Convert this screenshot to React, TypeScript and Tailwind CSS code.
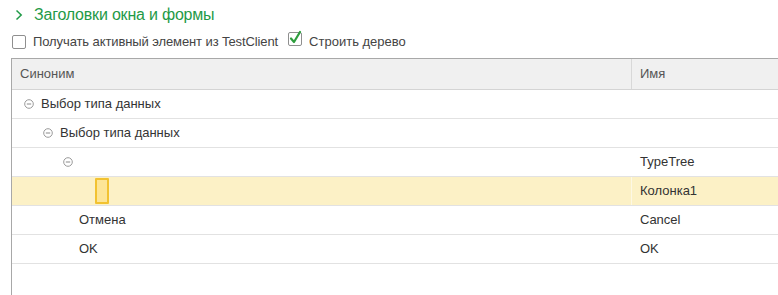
import React from 'react';

type Row = { pad: number; text?: string; name?: string; toggle?: boolean; selected?: boolean };

// pad = left offset of first item in the row, measured from the table's inner edge
const rows: Row[] = [
  { pad: 12, text: 'Выбор типа данных', toggle: true },
  { pad: 31, text: 'Выбор типа данных', toggle: true },
  { pad: 51, toggle: true, name: 'TypeTree' },
  { pad: 83, name: 'Колонка1', selected: true },
  { pad: 67, text: 'Отмена', name: 'Cancel' },
  { pad: 67, text: 'OK', name: 'OK' },
];

function MinusCircle() {
  return (
    <svg width="10" height="10" viewBox="0 0 10 10" className="shrink-0">
      <circle cx="5" cy="5" r="4.3" fill="none" stroke="#9a9a9a" strokeWidth="1" />
      <line x1="2.8" y1="5" x2="7.2" y2="5" stroke="#8a8a8a" strokeWidth="1" />
    </svg>
  );
}

function Checkbox({ checked }: { checked?: boolean }) {
  return (
    <span className="relative inline-block h-[14px] w-[14px] shrink-0 rounded-[2px] border border-[#8f8f8f] bg-white">
      {checked && (
        <svg width="13" height="15" viewBox="0 0 13 15" className="absolute -top-[3px] left-[0px]">
          <path d="M2 8.5 L5 12 L11 2" fill="none" stroke="#2e9e3e" strokeWidth="2.2" strokeLinecap="round" strokeLinejoin="round" />
        </svg>
      )}
    </span>
  );
}

export default function App() {
  return (
    <div className="h-[295px] w-[778px] overflow-hidden bg-white font-['Liberation_Sans',Arial,sans-serif] text-[13px] text-[#333]">
      {/* title */}
      <div className="flex h-[28px] items-center pl-[15px] pt-[2px]">
        <svg width="8" height="12" viewBox="0 0 8 12" className="mr-[11px]">
          <path d="M1.5 1.5 L6.2 6 L1.5 10.5" fill="none" stroke="#1f9a47" strokeWidth="1.5" />
        </svg>
        <span className="text-[16px] tracking-[-0.2px] text-[#1f9a47]">Заголовки окна и формы</span>
      </div>

      {/* options */}
      <div className="flex h-[27px] items-center pl-[12px]">
        <Checkbox />
        <span className="ml-[7px] tracking-[-0.1px] text-[#444]">Получать активный элемент из TestClient</span>
        <span className="ml-[10px]">
          <Checkbox checked />
        </span>
        <span className="ml-[7px] text-[#444]">Строить дерево</span>
      </div>

      {/* table */}
      <div className="ml-[11px] mt-[3px] h-[240px] border-l border-t border-[#a8a8a8]">
        <div className="flex h-[31px] border-b border-[#d4d4d4] bg-[#f0f0f0] text-[#555]">
          <div className="flex w-[619px] items-center pl-[8px]">Синоним</div>
          <div className="flex flex-1 items-center border-l border-[#d8d8d8] pl-[8px]">Имя</div>
        </div>
        {rows.map((r, i) => (
          <div
            key={i}
            className={`flex h-[29px] border-b border-[#e2e2e2] ${r.selected ? 'bg-[#fcf1c6]' : 'bg-white'}`}
          >
            <div className="flex w-[619px] items-center" style={{ paddingLeft: r.pad }}>
              {r.toggle && (
                <span className="mr-[7px]">
                  <MinusCircle />
                </span>
              )}
              {r.selected && (
                <span className="h-[26px] w-[14px] rounded-[1px] border-2 border-[#f2c230] bg-[#fde596]" />
              )}
              {r.text && <span>{r.text}</span>}
            </div>
            <div
              className={`flex flex-1 items-center pl-[8px] ${r.selected ? 'border-l border-[#fdf8e4]' : 'border-l border-transparent'}`}
            >
              {r.name}
            </div>
          </div>
        ))}
      </div>
    </div>
  );
}
